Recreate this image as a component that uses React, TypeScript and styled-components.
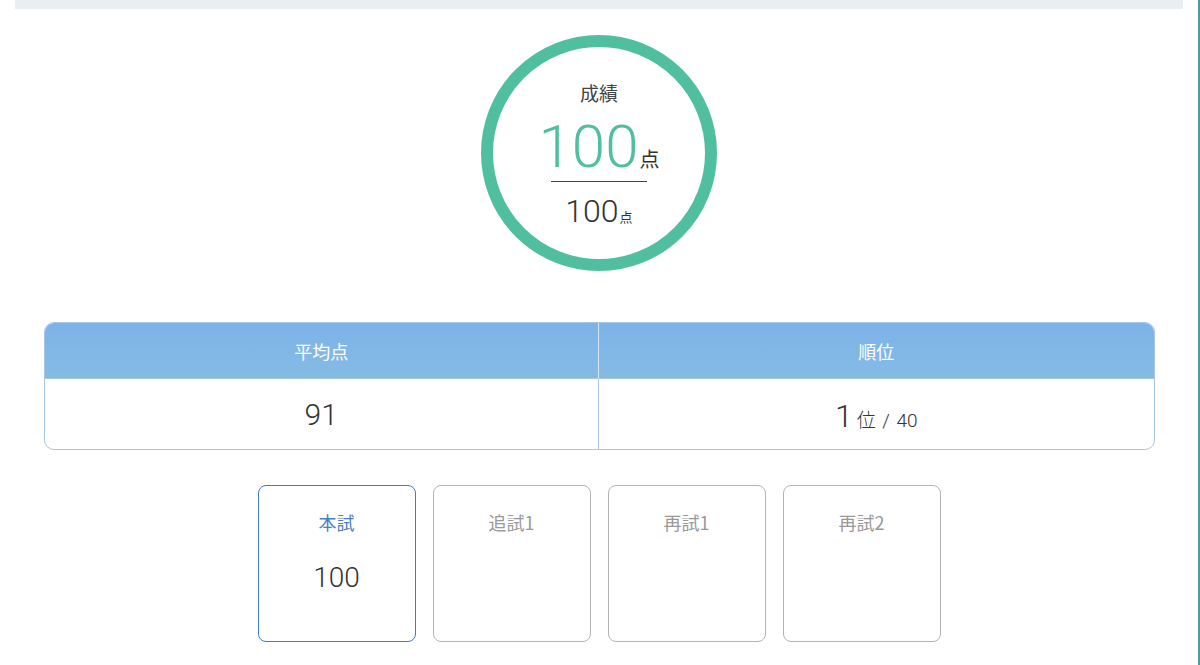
import React from "react";
import styled, { createGlobalStyle } from "styled-components";

const GlobalStyle = createGlobalStyle`
  html, body {
    margin: 0;
    padding: 0;
    background: #ffffff;
    font-family: Roboto, "Noto Sans CJK JP", sans-serif;
    font-weight: 300;
    color: #333333;
  }
`;

const Page = styled.div`
  position: relative;
  width: 1200px;
  height: 665px;
  box-sizing: border-box;
  border-right: 2px solid #4a9ea0;
  overflow: hidden;
`;

const TopBar = styled.div`
  margin: 0 15px 0 15px;
  height: 9px;
  background: #e9eef2;
`;

const Content = styled.div`
  display: flex;
  flex-direction: column;
  align-items: center;
  padding-top: 26px;
`;

const ScoreRing = styled.div`
  width: 236px;
  height: 236px;
  box-sizing: border-box;
  border: 12px solid #50bfa0;
  border-radius: 50%;
  display: flex;
  flex-direction: column;
  align-items: center;
  padding-top: 34px;
`;

const RingTitle = styled.div`
  font-family: "Noto Sans CJK JP", sans-serif;
  font-size: 19px;
  line-height: 24px;
  color: #444444;
  font-weight: 400;
`;

const MainScore = styled.div`
  display: flex;
  align-items: baseline;
  margin-top: 16px;
  color: #50bfa0;
  font-size: 60px;
  line-height: 52px;
  font-weight: 300;
  padding-bottom: 8px;
  border-bottom: 1px solid #444444;
  width: 96px;
  justify-content: center;
`;

const Unit = styled.span<{ size: number; color: string }>`
  font-family: "Noto Sans CJK JP", sans-serif;
  font-size: ${({ size }) => size}px;
  line-height: 1;
  color: ${({ color }) => color};
  font-weight: 400;
  margin-left: 1px;
`;

const TotalScore = styled.div`
  display: flex;
  align-items: baseline;
  margin-top: 11px;
  font-size: 32px;
  line-height: 36px;
  color: #333333;
  font-weight: 300;
`;

const StatsTable = styled.div`
  margin-top: 51px;
  width: 1111px;
  box-sizing: border-box;
  border: 1px solid #a9c6e3;
  border-radius: 10px;
  overflow: hidden;
  display: grid;
  grid-template-columns: 1fr 1fr;
`;

const HeaderCell = styled.div<{ last?: boolean }>`
  height: 55px;
  display: flex;
  align-items: center;
  justify-content: center;
  background: linear-gradient(#7db3e8, #84bbe4);
  color: #ffffff;
  font-family: "Noto Sans CJK JP", sans-serif;
  font-size: 18px;
  font-weight: 400;
  border-right: ${({ last }) => (last ? "none" : "1px solid #d8e7f5")};
  border-bottom: 1px solid #a9c6e3;
`;

const BodyCell = styled.div<{ last?: boolean }>`
  height: 70px;
  display: flex;
  justify-content: center;
  font-size: 30px;
  color: #333333;
  border-right: ${({ last }) => (last ? "none" : "1px solid #a9c6e3")};
  align-items: baseline;
  padding-top: 18px;
  box-sizing: border-box;
`;

const Rank = styled.span`
  font-size: 32px;
`;

const RankRest = styled.span`
  font-family: Roboto, "Noto Sans CJK JP", sans-serif;
  font-size: 19px;
  margin-left: 4px;
  word-spacing: 2px;
`;

const TrialRow = styled.div`
  margin-top: 35px;
  display: flex;
  gap: 17px;
`;

const TrialCard = styled.div<{ active?: boolean }>`
  width: 158px;
  height: 157px;
  box-sizing: border-box;
  border: ${({ active }) =>
    active ? "1.5px solid #3d7cc0" : "1.5px solid #b4b4b4"};
  border-radius: 8px;
  display: flex;
  flex-direction: column;
  align-items: center;
  padding-top: 24px;
`;

const TrialLabel = styled.div<{ active?: boolean }>`
  font-family: "Noto Sans CJK JP", sans-serif;
  font-size: 18px;
  line-height: 24px;
  font-weight: 400;
  color: ${({ active }) => (active ? "#4a80c2" : "#999999")};
`;

const TrialValue = styled.div`
  margin-top: 28px;
  font-size: 28px;
  line-height: 32px;
  color: #333333;
`;

const trials = [
  { label: "本試", value: "100", active: true },
  { label: "追試1", value: "" },
  { label: "再試1", value: "" },
  { label: "再試2", value: "" },
];

const App = () => {
  return (
    <Page>
      <GlobalStyle />
      <TopBar />
      <Content>
        <ScoreRing>
          <RingTitle>成績</RingTitle>
          <MainScore>
            100
            <Unit size={20} color="#333333">
              点
            </Unit>
          </MainScore>
          <TotalScore>
            100
            <Unit size={13} color="#333333">
              点
            </Unit>
          </TotalScore>
        </ScoreRing>

        <StatsTable>
          <HeaderCell>平均点</HeaderCell>
          <HeaderCell last>順位</HeaderCell>
          <BodyCell>91</BodyCell>
          <BodyCell last>
            <Rank>1</Rank>
            <RankRest>位 / 40</RankRest>
          </BodyCell>
        </StatsTable>

        <TrialRow>
          {trials.map(trial => (
            <TrialCard key={trial.label} active={trial.active}>
              <TrialLabel active={trial.active}>{trial.label}</TrialLabel>
              {trial.value && <TrialValue>{trial.value}</TrialValue>}
            </TrialCard>
          ))}
        </TrialRow>
      </Content>
    </Page>
  );
};

export default App;
